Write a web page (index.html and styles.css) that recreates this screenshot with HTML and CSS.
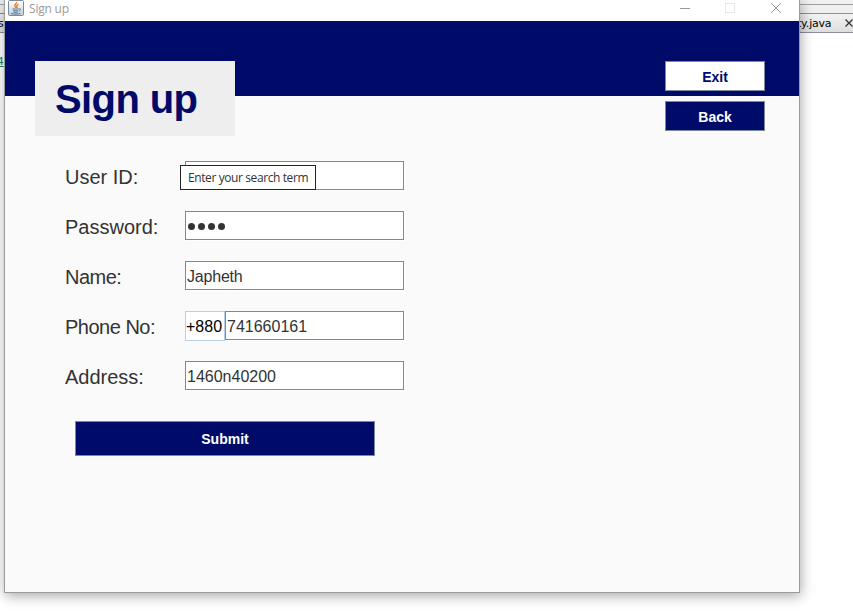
FILE: index.html
```html
<!DOCTYPE html>
<html lang="en">
<head>
<meta charset="utf-8">
<title>Sign up</title>
<link rel="stylesheet" href="styles.css">
</head>
<body>
<div class="desktop">
  <div class="editor">
    <div class="editor-toolbar"></div>
    <div class="editor-tabs">
      <span class="tab-left">st</span>
      <span class="tab-right">ty.java</span>
      <svg class="tab-close" width="8" height="8" viewBox="0 0 8 8"><path d="M.5.5l7 7M7.5.5l-7 7"/></svg>
    </div>
    <div class="code-line">4</div>
  </div>

  <main class="window">
    <div class="titlebar">
      <svg class="app-icon" width="16" height="16" viewBox="0 0 16 16">
        <defs><linearGradient id="g" x2="0" y2="1"><stop stop-color="#fff"/><stop offset="1" stop-color="#c3ced8"/></linearGradient></defs>
        <rect x=".5" y=".5" width="15" height="15" rx="1" fill="url(#g)" stroke="#7c8a9a"/>
        <path d="M8.6 2c.5 1.7-2.7 2.500-1.700 4.200.3.600.9 1 .9 1.800M10.500 4.300C8.800 5 8.300 6 9 6.800c.4.500.2.900-.2 1.300" fill="none" stroke="#e8821e" stroke-width="1.400"/>
        <path d="M4.500 9h6.300M5 10.800h5.200M5.500 12.300h4.200M11 8.800c2.400-.5 2.200 1.800-.3 2.400M3 13.500c2.500.9 7.500.8 9.500-.2" fill="none" stroke="#557b9c" stroke-width="1"/>
      </svg>
      <span class="window-title">Sign up</span>
      <svg class="controls" width="104" height="12" viewBox="0 0 104 12">
        <path d="M1 6.500h10" stroke="#999"/>
        <rect x="46.500" y="1.500" width="9" height="9" fill="none" stroke="#e7e7e7"/>
        <path d="M92 1l10 10M102 1l-10 10" stroke="#999"/>
      </svg>
    </div>

    <header class="banner">
      <h1>Sign up</h1>
      <div class="actions">
        <button class="btn btn-light">Exit</button>
        <button class="btn">Back</button>
      </div>
    </header>

    <form class="form">
      <div class="row">
        <label>User ID:</label>
        <div class="field"></div>
        <div class="tooltip"><span>Enter your search term</span></div>
      </div>
      <div class="row">
        <label>Password:</label>
        <div class="field">
          <div class="dots"><i></i><i></i><i></i><i></i></div>
        </div>
      </div>
      <div class="row"><label class="tight">Name:</label><div class="field field-name">Japheth</div></div>
      <div class="row">
        <label class="tight">Phone No:</label>
        <div class="prefix">+880</div>
        <div class="field field-phone">741660161</div>
      </div>
      <div class="row"><label>Address:</label><div class="field">1460n40200</div></div>
      <button type="button" class="btn submit">Submit</button>
    </form>
  </main>
</div>
</body>
</html>
```
FILE: styles.css
```css
* { box-sizing: border-box; }

body {
  margin: 0;
  font-family: "Liberation Sans", Arial, sans-serif;
  color: #333;
}

.desktop {
  position: relative;
  width: 853px;
  height: 611px;
  overflow: hidden;
  background: #fff;
}

/* Editor behind the window */
.editor-toolbar {
  height: 13px;
  background: linear-gradient(#f0f0f0 4px, #a0a0a0 4px, #a0a0a0 5px, #f0f0f0 5px);
}

.editor-tabs {
  display: flex;
  align-items: center;
  height: 20px;
  border-top: 1px solid #8c8e98;
  border-bottom: 1px solid #8c8e98;
  background: linear-gradient(#f3f3f3, #dedede);
  font: 11px "DejaVu Sans", sans-serif;
  letter-spacing: -0.2px;
  color: #000;
}

.tab-left { width: 12px; margin-left: -2px; }
.tab-right { width: 48px; margin-left: 787px; }
.tab-close {
  flex: none;
  fill: none;
  stroke: #333;
  stroke-width: 1.3;
}

.code-line {
  width: 7px;
  margin: 22px 0 0 -3px;
  font: 11px/14px "DejaVu Sans Mono", monospace;
  text-decoration: underline;
  color: #17845c;
}

/* Window frame */
.window {
  position: absolute;
  left: 4px;
  top: -1px;
  width: 796px;
  height: 594px;
  border: 1px solid #9b9b9b;
  background: #fafafa;
  box-shadow: 1px 3px 12px rgba(0, 0, 0, 0.34);
}

.titlebar {
  display: flex;
  align-items: flex-start;
  height: 21px;
  padding-left: 3px;
  background: #fff;
}

.window-title {
  margin-left: 5px;
  font: 12px/17px "Open Sans", sans-serif;
  letter-spacing: -0.2px;
  color: #999;
}

.controls {
  margin: 2px 16px 0 auto;
}

.banner {
  display: flex;
  justify-content: space-between;
  align-items: flex-start;
  height: 75px;
  padding: 40px 34px 0 30px;
  background: #000b69;
}

h1 {
  flex: none;
  width: 200px;
  height: 75px;
  margin: 0;
  padding-left: 20px;
  background: #eee;
  font-size: 40px;
  line-height: 76px;
  letter-spacing: -0.6px;
  color: #000b69;
}

.actions {
  display: flex;
  flex-direction: column;
  gap: 10px;
}

.btn {
  width: 100px;
  height: 30px;
  padding: 1px 0 0;
  border: 1px solid #7a8a99;
  background: #000b69;
  font: bold 14px "Liberation Sans", Arial, sans-serif;
  color: #fff;
}

.btn-light {
  background: #fff;
  color: #000b69;
}

/* Form */
.form {
  display: flex;
  flex-direction: column;
  gap: 20px;
  padding: 65px 0 0 60px;
}

.row {
  position: relative;
  display: flex;
  height: 30px;
}

label {
  width: 120px;
  font-size: 20px;
  line-height: 32px;
}

.tight { letter-spacing: -0.5px; }

.field {
  width: 219px;
  height: 29px;
  padding-left: 1px;
  border: 1px solid #7a8a99;
  background: #fff;
  box-shadow: 1px 1px #fff;
  font-size: 16px;
  line-height: 29px;
}

.field-name { letter-spacing: -0.2px; }

.field-phone { width: 179px; }

.prefix {
  width: 40px;
  height: 30px;
  border: 1px solid #b8cfe5;
  background: #fff;
  font-size: 16px;
  line-height: 29px;
  color: #000;
}

.dots {
  display: flex;
  gap: 3px;
  padding: 11px 0 0 1px;
}

.dots i {
  width: 7px;
  height: 7px;
  border-radius: 50%;
  background: #333;
}

.tooltip {
  position: absolute;
  left: 115px;
  top: 4px;
  width: 136px;
  height: 25px;
  padding-left: 7px;
  border: 1px solid #222;
  background: #fff;
  font: 12px/24px "Open Sans", sans-serif;
  letter-spacing: -0.4px;
  white-space: nowrap;
}

.submit {
  width: 300px;
  height: 35px;
  margin: 10px 0 0 10px;
}
```
